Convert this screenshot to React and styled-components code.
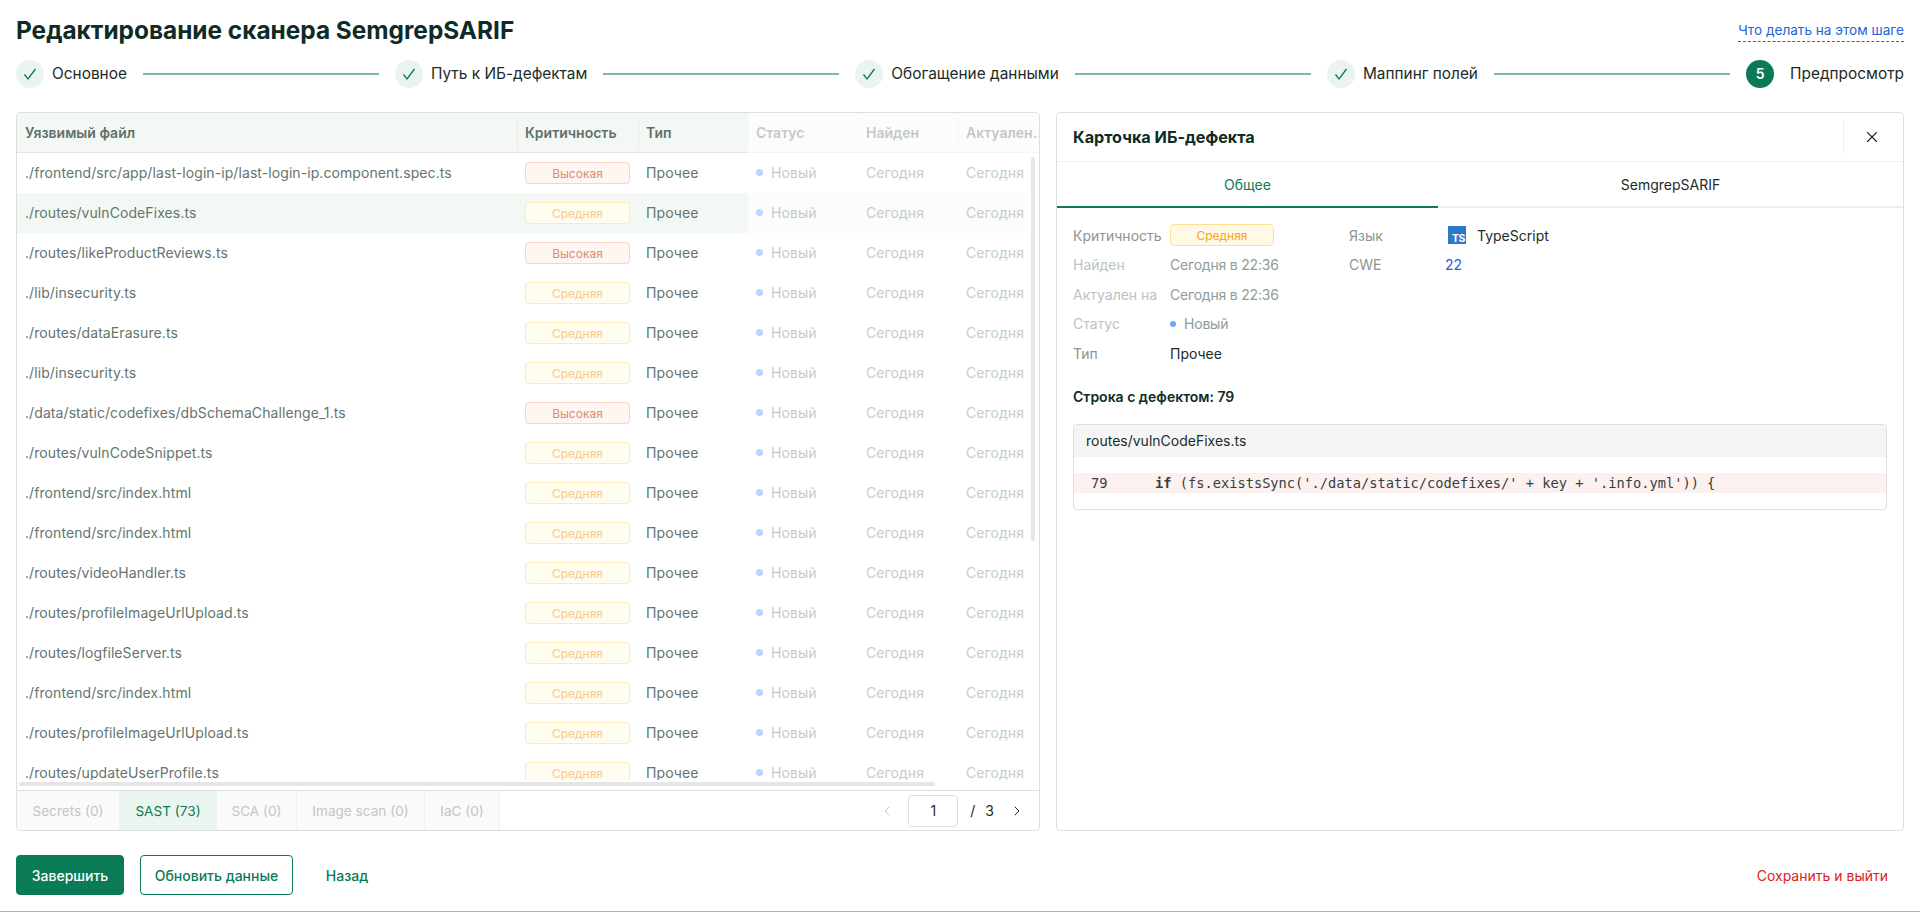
import React from "react";
import styled, { createGlobalStyle } from "styled-components";
import { X, ChevronLeft, ChevronRight } from "lucide-react";

const Global = createGlobalStyle`
  html, body { margin: 0; padding: 0; background: #fff; }
  body { font-family: Inter, "Noto Sans", "Liberation Sans", sans-serif; color: #1c2b27; overflow: hidden; }
  * { box-sizing: border-box; }
`;

const Page = styled.div`
  height: 912px;
  padding: 16px 16px 0;
  display: flex;
  flex-direction: column;
  border-bottom: 1px solid #b3b3b3;
`;
const TopBar = styled.header`
  display: flex;
  justify-content: space-between;
  align-items: flex-start;
  height: 28px;
`;
const Title = styled.h1`
  margin: 0;
  font-size: 24.4px;
  line-height: 28px;
  font-weight: 700;
  color: #0e2b25;
`;
const HelpLink = styled.a`
  font-size: 13.6px;
  line-height: 20px;
  margin-top: 4px;
  color: #2463d6;
  border-bottom: 1px dashed #2463d6;
  padding-bottom: 1px;
`;
const Stepper = styled.nav`
  display: flex;
  align-items: center;
  gap: 16px;
  margin-top: 16px;
  height: 28px;
`;
const Step = styled.div`
  display: flex;
  align-items: center;
  gap: 8px;
  flex: none;
  font-size: 15.4px;
  line-height: 20px;
  color: #1c2b27;
`;
const StepCircle = styled.span`
  width: 28px;
  height: 28px;
  border-radius: 50%;
  display: flex;
  align-items: center;
  justify-content: center;
  font-size: 14px;
  font-weight: 600;
  background: ${(p) => (p.$active ? "#0b7a56" : "#e9f4ee")};
  color: ${(p) => (p.$active ? "#fff" : "#0b7a56")};
`;
const ActiveLabel = styled.span`
  margin-left: 8px;
`;
const StepLine = styled.span`
  flex: 1;
  height: 2px;
  background: #7db8a0;
`;
const Panels = styled.main`
  display: grid;
  grid-template-columns: 1024px 848px;
  gap: 16px;
  margin-top: 24px;
  height: 719px;
`;
const Panel = styled.section`
  border: 1px solid #dcdfde;
  border-radius: 4px;
  display: flex;
  flex-direction: column;
  min-height: 0;
  overflow: hidden;
  position: relative;
`;
const TableArea = styled.div`
  flex: 1;
  min-height: 0;
  overflow: hidden;
  position: relative;
`;
const Row = styled.div`
  display: grid;
  grid-template-columns: 500px 121px 110px 110px 100px 93px;
  height: 40px;
  align-items: center;
  background: ${(p) => (p.$head || p.$selected ? "#f3f8f4" : "transparent")};
  border-bottom: ${(p) => (p.$head ? "1px solid #e3e6e5" : "none")};
  margin-right: ${(p) => (p.$head ? "0" : "12px")};
`;
const HeadCell = styled.div`
  height: 32px;
  line-height: 32px;
  padding: 0 2px 0 ${(p) => (p.$first ? "8px" : "7px")};
  font-size: 14px;
  font-weight: 600;
  color: #5f706a;
  white-space: nowrap;
  overflow: hidden;
  text-overflow: ellipsis;
  border-left: ${(p) => (p.$first ? "none" : "1px solid #e6ebe8")};
`;
const Cell = styled.div`
  padding: 0 8px 2px;
  font-size: 14px;
  letter-spacing: 0.08px;
  color: #63756e;
  white-space: nowrap;
  overflow: hidden;
  display: flex;
  align-items: center;
  gap: 8px;
`;
const BadgeCell = styled(Cell)`
  padding-bottom: 0;
`;
const Dot = styled.span`
  width: ${(p) => (p.$small ? "6px" : "7px")};
  height: ${(p) => (p.$small ? "6px" : "7px")};
  border-radius: 50%;
  background: ${(p) => (p.$small ? "#6ea5f7" : "#4f94ff")};
  flex: none;
`;
const Badge = styled.span`
  width: ${(p) => p.$w || "105px"};
  height: 22px;
  border-radius: 4px;
  display: flex;
  align-items: center;
  justify-content: center;
  font-size: 12px;
  letter-spacing: 0;
  border: 1px solid ${(p) => (p.$level === "high" ? "#fbd3c2" : "#ffe9b5")};
  background: ${(p) => (p.$level === "high" ? "#fff6f2" : "#fffcf0")};
  color: ${(p) => (p.$level === "high" ? "#dd8a76" : "#fcc97e")};
`;
const Strong = styled(Badge)`
  border-color: #ffdf91;
  background: #fff9e5;
  color: #f5a623;
`;
const Veil = styled.div`
  position: absolute;
  top: 0;
  bottom: 0;
  left: 731px;
  right: 0;
  background: rgba(255, 255, 255, 0.62);
  pointer-events: none;
`;
const ThumbV = styled.div`
  position: absolute;
  top: 44px;
  right: 4px;
  width: 4px;
  height: 384px;
  border-radius: 2px;
  background: #e6e6e6;
`;
const ThumbH = styled.div`
  position: absolute;
  bottom: 4px;
  left: 2px;
  width: 916px;
  height: 4px;
  border-radius: 2px;
  background: #e6e6e6;
`;
const BottomMask = styled.div`
  position: absolute;
  bottom: 0;
  left: 0;
  right: 0;
  height: 10px;
  background: #fff;
`;
const TableFooter = styled.div`
  height: 40px;
  flex: none;
  border-top: 1px solid #dcdfde;
  display: flex;
  align-items: center;
`;
const SourceTabs = styled.div`
  display: flex;
  height: 100%;
`;
const SourceTab = styled.div`
  width: ${(p) => p.$w}px;
  display: flex;
  align-items: center;
  justify-content: center;
  font-size: 13.6px;
  background: ${(p) => (p.$active ? "#ebf5ef" : "#fafafa")};
  color: ${(p) => (p.$active ? "#0b7a56" : "#c2c6c4")};
  border-right: 1px solid ${(p) => (p.$active ? "#ebf5ef" : "#f0f0f0")};
`;
const Pager = styled.div`
  margin-left: auto;
  display: flex;
  align-items: center;
  font-size: 14px;
  color: #1c2b27;
  padding-right: 14px;
`;
const PagerButton = styled.span`
  display: flex;
  color: ${(p) => (p.$off ? "#bfc4c2" : "#1c2b27")};
`;
const PageInput = styled.div`
  width: 50px;
  height: 32px;
  border: 1px solid #dcdfde;
  border-radius: 4px;
  display: flex;
  align-items: center;
  justify-content: center;
  margin: 0 12px 0 13px;
`;
const PageTotal = styled.span`
  margin-right: 15px;
  word-spacing: 6px;
`;
const CardHeader = styled.div`
  height: 49px;
  flex: none;
  padding: 0 4px 0 16px;
  display: flex;
  align-items: center;
  justify-content: space-between;
  border-bottom: 1px solid #f0f0f0;
`;
const CardTitle = styled.h2`
  margin: 0;
  font-size: 16.2px;
  font-weight: 700;
  color: #0e2b25;
`;
const CloseButton = styled.div`
  width: 56px;
  height: 32px;
  border-left: 1px solid #eeeeee;
  display: flex;
  align-items: center;
  justify-content: center;
  color: #1c2b27;
`;
const Tabs = styled.div`
  display: grid;
  grid-template-columns: 381px 1fr;
  height: 46px;
  flex: none;
`;
const Tab = styled.div`
  display: flex;
  align-items: center;
  justify-content: center;
  font-size: 14px;
  color: ${(p) => (p.$active ? "#0b7a56" : "#1c2b27")};
  border-bottom: 2px solid ${(p) => (p.$active ? "#0b7a56" : "#eeeeee")};
`;
const CardBody = styled.div`
  padding: 16px;
`;
const Fields = styled.div`
  display: grid;
  grid-template-columns: 276px 1fr;
`;
const FieldCol = styled.div`
  display: flex;
  flex-direction: column;
  gap: 7.5px;
`;
const Field = styled.div`
  display: grid;
  grid-template-columns: ${(p) => p.$label}px 1fr;
  height: 22px;
  align-items: center;
  font-size: 14px;
`;
const Label = styled.span`
  color: ${(p) => (p.$dim ? "#bcc3c0" : "#8b9591")};
  white-space: nowrap;
`;
const Value = styled.span`
  display: flex;
  align-items: center;
  gap: 8px;
  white-space: nowrap;
  letter-spacing: ${(p) => (p.$dark ? "0" : "-0.2px")};
  color: ${(p) => (p.$dark ? "#1c2b27" : "#8f9c97")};
`;
const CweLink = styled.span`
  color: #2463d6;
`;
const TsIcon = styled.span`
  width: 18px;
  height: 18px;
  background: #3178c6;
  color: #fff;
  font-size: 10.5px;
  font-weight: 700;
  letter-spacing: -0.5px;
  line-height: 1;
  display: flex;
  align-items: flex-end;
  justify-content: flex-end;
  padding: 0 1px 0 0;
  margin: 0 3px 0 3px;
`;
const DefectTitle = styled.h3`
  margin: 23px 0 17px;
  font-size: 14px;
  line-height: 20px;
  font-weight: 600;
  color: #0e2b25;
`;
const CodeBox = styled.div`
  border: 1px solid #dfe1e0;
  border-radius: 4px;
  height: 86px;
  overflow: hidden;
`;
const CodeHead = styled.div`
  height: 32px;
  background: #f5f5f5;
  font-size: 14px;
  line-height: 32px;
  padding-left: 12px;
  color: #1c2b27;
`;
const CodeLine = styled.div`
  margin-top: 16px;
  height: 20px;
  background: #fdf1f0;
  display: flex;
  align-items: center;
  font-family: "DejaVu Sans Mono", "Liberation Mono", monospace;
  font-size: 13.7px;
  color: #33413d;
  white-space: pre;
`;
const LineNo = styled.span`
  width: 81px;
  padding-left: 17px;
  flex: none;
`;
const Keyword = styled.b`
  font-weight: 700;
`;
const Actions = styled.footer`
  display: flex;
  align-items: center;
  gap: 16px;
  margin-top: 24px;
  height: 40px;
`;
const Button = styled.button`
  height: 40px;
  font: inherit;
  font-size: 14px;
  font-weight: 500;
  border-radius: 4px;
  padding: 0;
  width: ${(p) => p.$w}px;
  border: 1px solid ${(p) => (p.$ghost ? "transparent" : "#0b7a56")};
  background: ${(p) => (p.$primary ? "#0b7a56" : "#fff")};
  color: ${(p) => (p.$primary ? "#fff" : "#0b7a56")};
`;
const SaveExit = styled.a`
  margin-left: auto;
  margin-right: 16px;
  font-size: 14px;
  color: #e02020;
`;

const CheckMark = () => (
  <svg width="16" height="16" viewBox="0 0 16 16" fill="none" stroke="currentColor" strokeWidth="1.3">
    <path d="M2.5 8.5 L6 13 L13.5 3" />
  </svg>
);

const files = [
  ["./frontend/src/app/last-login-ip/last-login-ip.component.spec.ts", "high"],
  ["./routes/vulnCodeFixes.ts", "mid"],
  ["./routes/likeProductReviews.ts", "high"],
  ["./lib/insecurity.ts", "mid"],
  ["./routes/dataErasure.ts", "mid"],
  ["./lib/insecurity.ts", "mid"],
  ["./data/static/codefixes/dbSchemaChallenge_1.ts", "high"],
  ["./routes/vulnCodeSnippet.ts", "mid"],
  ["./frontend/src/index.html", "mid"],
  ["./frontend/src/index.html", "mid"],
  ["./routes/videoHandler.ts", "mid"],
  ["./routes/profileImageUrlUpload.ts", "mid"],
  ["./routes/logfileServer.ts", "mid"],
  ["./frontend/src/index.html", "mid"],
  ["./routes/profileImageUrlUpload.ts", "mid"],
  ["./routes/updateUserProfile.ts", "mid"],
];
const steps = ["Основное", "Путь к ИБ-дефектам", "Обогащение данными", "Маппинг полей"];
const heads = ["Уязвимый файл", "Критичность", "Тип", "Статус", "Найден", "Актуален на"];
const sources = [
  ["Secrets (0)", 103],
  ["SAST (73)", 97, true],
  ["SCA (0)", 80],
  ["Image scan (0)", 128],
  ["IaC (0)", 75],
];

export default function App() {
  return (
    <Page>
      <Global />
      <TopBar>
        <Title>Редактирование сканера SemgrepSARIF</Title>
        <HelpLink>Что делать на этом шаге</HelpLink>
      </TopBar>
      <Stepper>
        {steps.map((s) => (
          <React.Fragment key={s}>
            <Step>
              <StepCircle><CheckMark /></StepCircle>
              {s}
            </Step>
            <StepLine />
          </React.Fragment>
        ))}
        <Step>
          <StepCircle $active>5</StepCircle>
          <ActiveLabel>Предпросмотр</ActiveLabel>
        </Step>
      </Stepper>
      <Panels>
        <Panel>
          <TableArea>
            <Row $head>
              {heads.map((h, i) => (
                <HeadCell key={h} $first={i === 0}>{h}</HeadCell>
              ))}
            </Row>
            {files.map(([f, level], i) => (
              <Row key={i} $selected={i === 1}>
                <Cell>{f}</Cell>
                <BadgeCell><Badge $level={level}>{level === "high" ? "Высокая" : "Средняя"}</Badge></BadgeCell>
                <Cell>Прочее</Cell>
                <Cell><Dot />Новый</Cell>
                <Cell>Сегодня</Cell>
                <Cell>Сегодня</Cell>
              </Row>
            ))}
            <Veil />
            <BottomMask />
            <ThumbV />
            <ThumbH />
          </TableArea>
          <TableFooter>
            <SourceTabs>
              {sources.map(([t, w, a]) => (
                <SourceTab key={t} $w={w} $active={a}>{t}</SourceTab>
              ))}
            </SourceTabs>
            <Pager>
              <PagerButton $off><ChevronLeft size={16} strokeWidth={1.5} /></PagerButton>
              <PageInput>1</PageInput>
              <PageTotal>/ 3</PageTotal>
              <PagerButton><ChevronRight size={16} strokeWidth={1.5} /></PagerButton>
            </Pager>
          </TableFooter>
        </Panel>
        <Panel>
          <CardHeader>
            <CardTitle>Карточка ИБ-дефекта</CardTitle>
            <CloseButton><X size={18} strokeWidth={1.5} /></CloseButton>
          </CardHeader>
          <Tabs>
            <Tab $active>Общее</Tab>
            <Tab>SemgrepSARIF</Tab>
          </Tabs>
          <CardBody>
            <Fields>
              <FieldCol>
                <Field $label={97}><Label>Критичность</Label><Strong $w="104px">Средняя</Strong></Field>
                <Field $label={97}><Label $dim>Найден</Label><Value>Сегодня в 22:36</Value></Field>
                <Field $label={97}><Label $dim>Актуален на</Label><Value>Сегодня в 22:36</Value></Field>
                <Field $label={97}><Label $dim>Статус</Label><Value><Dot $small />Новый</Value></Field>
                <Field $label={97}><Label>Тип</Label><Value $dark>Прочее</Value></Field>
              </FieldCol>
              <FieldCol>
                <Field $label={96}><Label>Язык</Label><Value $dark><TsIcon>TS</TsIcon>TypeScript</Value></Field>
                <Field $label={96}><Label>CWE</Label><CweLink>22</CweLink></Field>
              </FieldCol>
            </Fields>
            <DefectTitle>Строка с дефектом: 79</DefectTitle>
            <CodeBox>
              <CodeHead>routes/vulnCodeFixes.ts</CodeHead>
              <CodeLine>
                <LineNo>79</LineNo>
                <span><Keyword>if</Keyword>{" (fs.existsSync('./data/static/codefixes/' + key + '.info.yml')) {"}</span>
              </CodeLine>
            </CodeBox>
          </CardBody>
        </Panel>
      </Panels>
      <Actions>
        <Button $primary $w={108}>Завершить</Button>
        <Button $w={153}>Обновить данные</Button>
        <Button $ghost $w={76}>Назад</Button>
        <SaveExit>Сохранить и выйти</SaveExit>
      </Actions>
    </Page>
  );
}
